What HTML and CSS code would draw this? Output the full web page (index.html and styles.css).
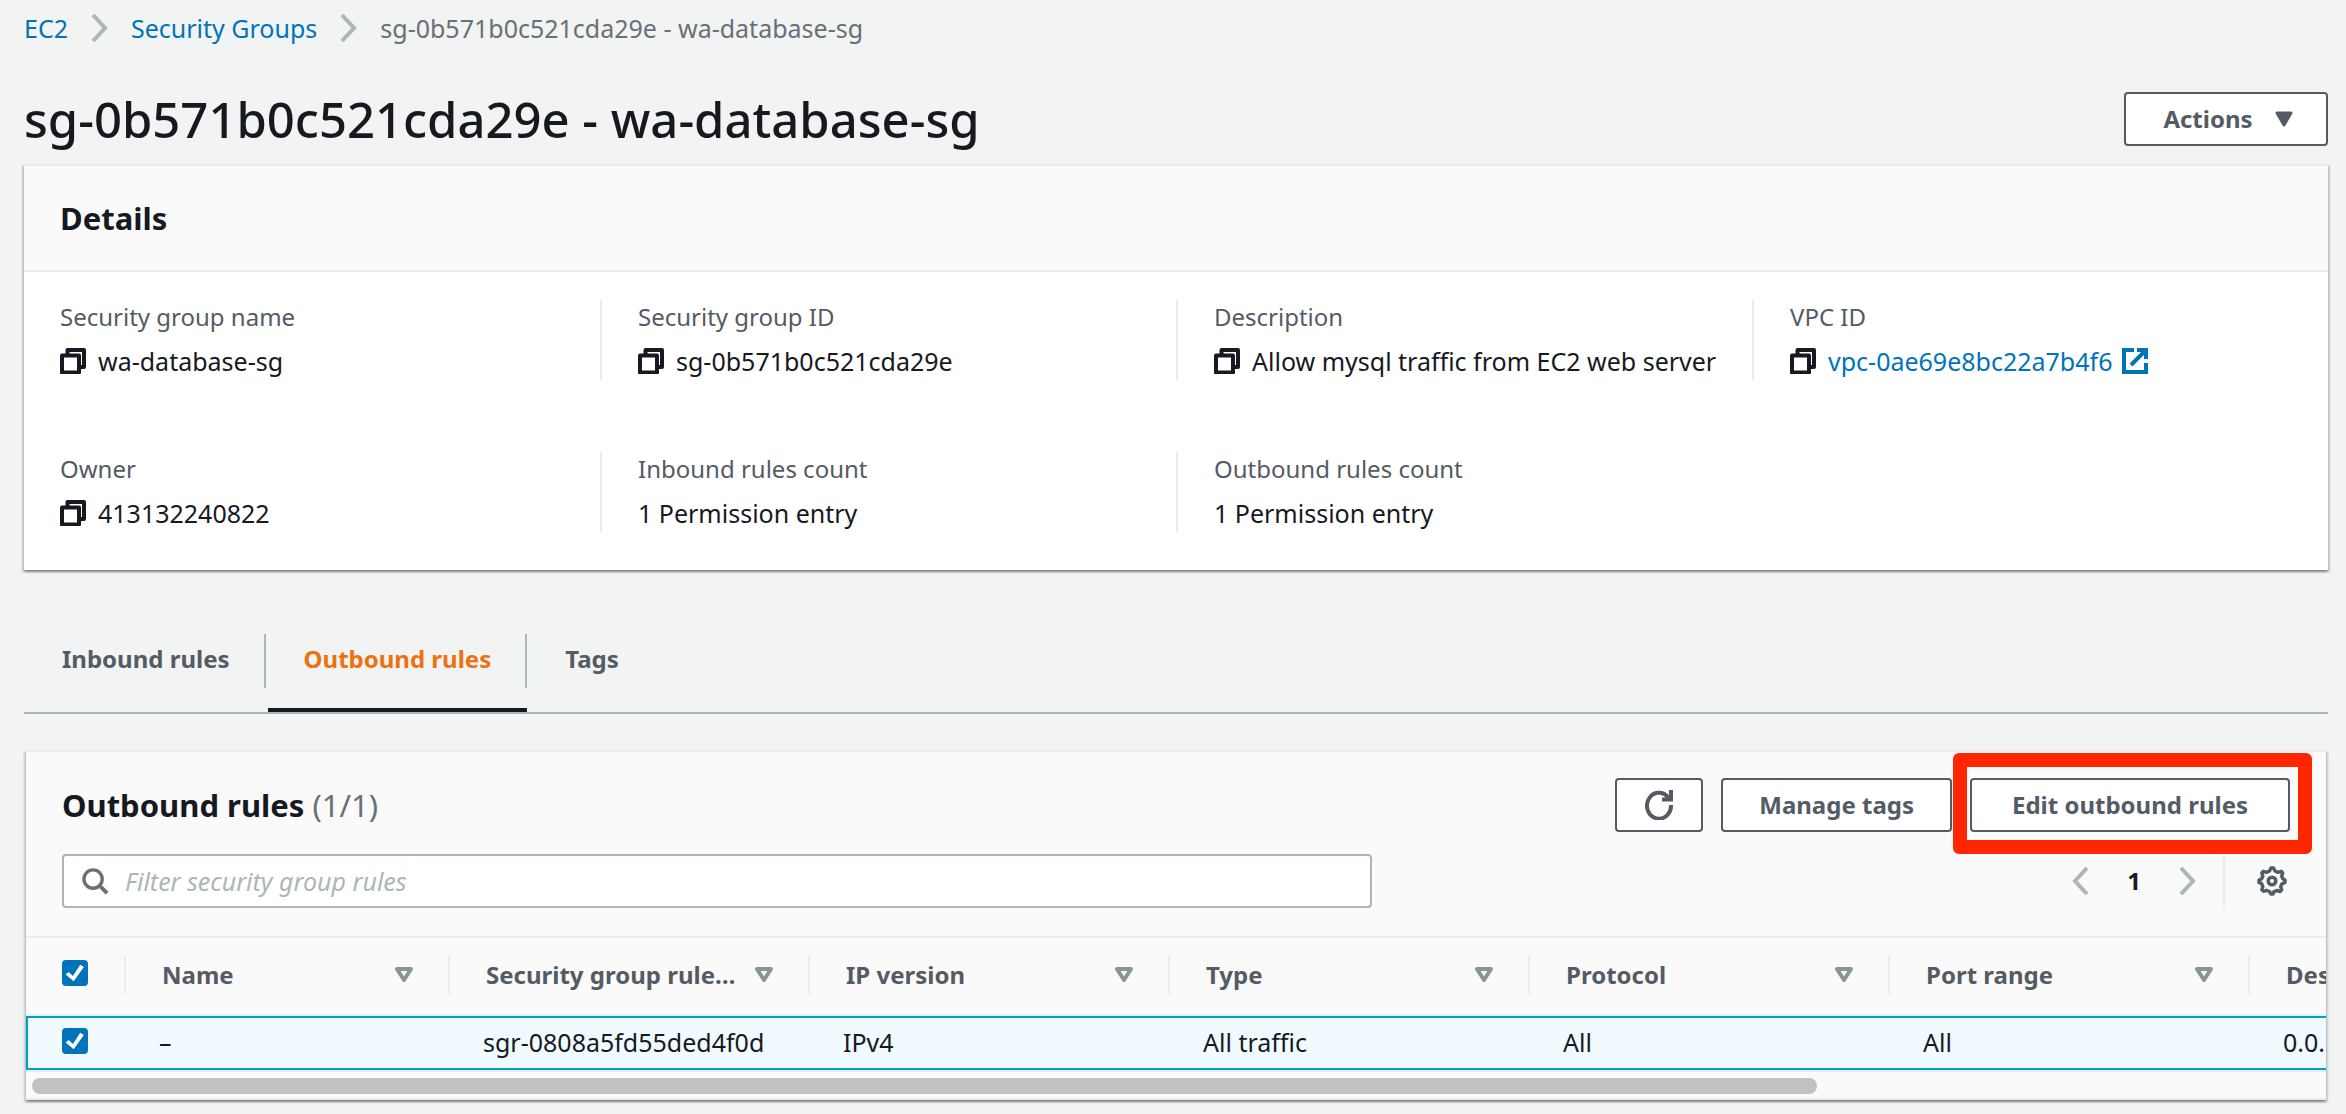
FILE: index.html
```html
<!DOCTYPE html>
<html lang="en">
<head>
<meta charset="utf-8">
<meta name="viewport" content="width=device-width, initial-scale=1">
<title>sg-0b571b0c521cda29e - wa-database-sg</title>
<link rel="stylesheet" href="styles.css">
</head>
<body>
<svg class="sprite" aria-hidden="true">
  <symbol id="i-copy" viewBox="0 0 26 26"><path d="M2 7.500h17v17H2z M7.500 7V2H24v17h-5" fill="none" stroke="currentColor" stroke-width="4" stroke-linejoin="round"/></symbol>
  <symbol id="i-external" viewBox="0 0 26 26"><path d="M12 2H2v22h22V15 M15 2h9v9 M23 3L9 17" fill="none" stroke="currentColor" stroke-width="4"/></symbol>
  <symbol id="i-next" viewBox="0 0 17 28"><path d="M2 1l12 13L2 27" fill="none" stroke="currentColor" stroke-width="4"/></symbol>
  <symbol id="i-prev" viewBox="0 0 17 28"><path d="M15 1L3 14l12 13" fill="none" stroke="currentColor" stroke-width="4"/></symbol>
  <symbol id="i-down" viewBox="0 0 18 16"><path d="M2 2h14L9 14z" fill="currentColor" stroke="currentColor" stroke-width="3" stroke-linejoin="round"/></symbol>
  <symbol id="i-sort" viewBox="0 0 18 16"><path d="M2 2h14L9 13z" fill="none" stroke="currentColor" stroke-width="4" stroke-linejoin="round"/></symbol>
  <symbol id="i-refresh" viewBox="0 0 28 30"><path d="M26 15A12 13 0 1 1 22.500 6.500L25 9 M26 0v9.500H17" fill="none" stroke="currentColor" stroke-width="4"/></symbol>
  <symbol id="i-search" viewBox="0 0 28 28"><circle cx="11.500" cy="11.500" r="9.500" fill="none" stroke="currentColor" stroke-width="3.500"/><path d="M18 18L26 26" stroke="currentColor" stroke-width="4"/></symbol>
  <symbol id="i-gear" viewBox="0 0 30 30"><path d="M15 2h1.500l1.500 3 3 1.300 3.200-1 1.500 1.600-1 3.100 1.200 2.800L28 14v2.500l-3 1.300-1.300 3 1 3-1.700 1.700-3-1-3 1.200L16 28h-2l-1.500-2.500-3-1.200-3 1-1.700-1.600 1-3-1.200-3L2 16.500V14l2.600-1.200L5.800 10l-1-3.100 1.600-1.600 3.100 1 3-1.300L14 2z" fill="none" stroke="currentColor" stroke-width="3.500" stroke-linejoin="round"/><circle cx="15" cy="15" r="3.800" fill="none" stroke="currentColor" stroke-width="3.500"/></symbol>
</svg>

<nav class="crumbs" aria-label="Breadcrumb">
  <a href="#">EC2</a>
  <svg class="chevron"><use href="#i-next"/></svg>
  <a href="#">Security Groups</a>
  <svg class="chevron"><use href="#i-next"/></svg>
  <span>sg-0b571b0c521cda29e - wa-database-sg</span>
</nav>

<main>
  <header class="page-head">
    <h1>sg-0b571b0c521cda29e - wa-database-sg</h1>
    <button class="btn btn-menu" type="button">Actions <svg class="tri"><use href="#i-down"/></svg></button>
  </header>

  <section class="card">
    <div class="card-head"><h2>Details</h2></div>
    <dl class="details">
      <div><dt>Security group name</dt><dd><svg class="icon"><use href="#i-copy"/></svg>wa-database-sg</dd></div>
      <div><dt>Security group ID</dt><dd><svg class="icon"><use href="#i-copy"/></svg>sg-0b571b0c521cda29e</dd></div>
      <div><dt>Description</dt><dd><svg class="icon"><use href="#i-copy"/></svg>Allow mysql traffic from EC2 web server</dd></div>
      <div><dt>VPC ID</dt><dd><svg class="icon"><use href="#i-copy"/></svg><a href="#">vpc-0ae69e8bc22a7b4f6 <svg class="icon"><use href="#i-external"/></svg></a></dd></div>
      <div><dt>Owner</dt><dd><svg class="icon"><use href="#i-copy"/></svg>413132240822</dd></div>
      <div><dt>Inbound rules count</dt><dd>1 Permission entry</dd></div>
      <div><dt>Outbound rules count</dt><dd>1 Permission entry</dd></div>
    </dl>
  </section>

  <nav class="tabs">
    <a href="#">Inbound rules</a>
    <a href="#" class="active" aria-current="page">Outbound rules</a>
    <a href="#">Tags</a>
  </nav>

  <section class="card rules">
    <div class="rules-head">
      <div class="bar">
        <h2>Outbound rules <span>(1/1)</span></h2>
        <div class="actions">
          <button class="btn btn-icon" type="button" aria-label="Refresh"><svg class="refresh"><use href="#i-refresh"/></svg></button>
          <button class="btn" type="button">Manage tags</button>
          <div class="marked">
            <button class="btn btn-wide" type="button">Edit outbound rules</button>
            <span class="marker"></span>
          </div>
        </div>
      </div>
      <div class="bar">
        <label class="search">
          <svg class="glass"><use href="#i-search"/></svg>
          <input type="text" placeholder="Filter security group rules" aria-label="Filter security group rules">
        </label>
        <div class="pager">
          <button type="button" aria-label="Previous page"><svg class="chevron"><use href="#i-prev"/></svg></button>
          <button type="button" class="page">1</button>
          <button type="button" aria-label="Next page"><svg class="chevron"><use href="#i-next"/></svg></button>
          <button type="button" class="settings" aria-label="Preferences"><svg class="gear"><use href="#i-gear"/></svg></button>
        </div>
      </div>
    </div>
    <div class="scroller">
      <table>
        <colgroup><col class="c-check"><col class="c-name"><col><col><col><col><col><col><col></colgroup>
        <thead>
          <tr>
            <th><input type="checkbox" checked aria-label="Select all rules"></th>
            <th><div>Name<svg class="sort"><use href="#i-sort"/></svg></div></th>
            <th><div>Security group rule…<svg class="sort"><use href="#i-sort"/></svg></div></th>
            <th><div>IP version<svg class="sort"><use href="#i-sort"/></svg></div></th>
            <th><div>Type<svg class="sort"><use href="#i-sort"/></svg></div></th>
            <th><div>Protocol<svg class="sort"><use href="#i-sort"/></svg></div></th>
            <th><div>Port range<svg class="sort"><use href="#i-sort"/></svg></div></th>
            <th><div>Destination</div></th>
            <th></th>
          </tr>
        </thead>
        <tbody>
          <tr>
            <td><input type="checkbox" checked aria-label="Select rule"></td>
            <td>–</td>
            <td>sgr-0808a5fd55ded4f0d</td>
            <td>IPv4</td>
            <td>All traffic</td>
            <td>All</td>
            <td>All</td>
            <td>0.0.0.0/0</td>
            <td></td>
          </tr>
        </tbody>
      </table>
    </div>
    <div class="track"><div class="thumb"></div></div>
  </section>
</main>
</body>
</html>
```
FILE: styles.css
```css
* { box-sizing: border-box; }

body {
  margin: 0;
  padding: 8px 18px 12px 24px;
  background: #f2f3f3;
  color: #16191f;
  font: 25px/34px "Noto Sans", "Open Sans", sans-serif;
}

h1, h2, dl, dd { margin: 0; }
a { color: #0073bb; text-decoration: none; }
button, input { font: inherit; color: inherit; }
button { cursor: pointer; }
svg { flex: none; display: block; }

.sprite { position: absolute; width: 0; height: 0; }
.icon { width: 26px; height: 26px; }
.chevron { width: 17px; height: 28px; color: #aab7b8; }
.tri, .sort { width: 18px; height: 16px; }
.sort { color: #879596; }
.refresh { width: 28px; height: 30px; }
.glass { width: 27px; height: 27px; color: #687078; }
.gear { width: 30px; height: 30px; }

.crumbs {
  display: flex;
  align-items: center;
  gap: 23px;
  height: 40px;
  color: #687078;
}

.page-head {
  display: flex;
  justify-content: space-between;
  align-items: center;
  margin: 44px 0 18px;
}
h1 { font-size: 49px; line-height: 54px; font-weight: 500; }
h2 { font-size: 31px; line-height: 54px; font-weight: 700; }
h2 span { font-weight: 400; color: #687078; }

.btn {
  display: flex;
  align-items: center;
  justify-content: center;
  gap: 22px;
  height: 54px;
  padding: 0 36px;
  border: 2px solid #545b64;
  border-radius: 4px;
  background: #fff;
  color: #545b64;
  font-size: 24px;
  font-weight: 700;
  white-space: nowrap;
}
.btn-menu { min-width: 204px; padding-right: 32px; }
.btn-icon { padding: 0 28px; }
.btn-wide { min-width: 320px; }

.card {
  border-top: 2px solid #eaeded;
  background: #fff;
  box-shadow: 0 2px 2px rgba(0, 28, 36, .3), 2px 2px 2px rgba(0, 28, 36, .15), -2px 2px 2px rgba(0, 28, 36, .15);
}
.card-head {
  padding: 25px 36px;
  background: #fafafa;
  border-bottom: 2px solid #eaeded;
}

.details {
  display: grid;
  grid-template-columns: repeat(4, 1fr);
  row-gap: 72px;
  padding: 28px 0 38px;
}
.details > div { padding: 0 20px 2px 36px; border-left: 2px solid #eaeded; }
.details > div:nth-child(4n + 1) { border-left-color: transparent; padding-left: 34px; }
dt { font-size: 24px; color: #545b64; }
dd { display: flex; align-items: center; gap: 12px; margin-top: 10px; }
dd a { display: flex; align-items: center; gap: 10px; }

.tabs {
  display: flex;
  margin: 64px 0 36px;
  border-bottom: 2px solid #aab7b8;
  font-size: 24px;
  font-weight: 700;
}
.tabs a {
  position: relative;
  height: 54px;
  margin-bottom: 24px;
  padding: 0 34px 0 38px;
  border-right: 2px solid #aab7b8;
  color: #545b64;
  line-height: 50px;
}
.tabs a:last-child { border-right: 0; }
.tabs .active { color: #ec7211; }
.tabs .active::after {
  content: "";
  position: absolute;
  left: 2px;
  right: -2px;
  bottom: -24px;
  height: 4px;
  background: #16191f;
}

.rules { margin: 0 2px; background: #fafafa; border-bottom: 2px solid #eaeded; }
.rules-head {
  display: grid;
  gap: 22px;
  padding: 26px 36px 28px;
  border-bottom: 2px solid #eaeded;
}
.bar { display: flex; justify-content: space-between; }
.actions { display: flex; gap: 18px; }
.marked { position: relative; }
.marker {
  position: absolute;
  inset: -25px -22px -22px -17px;
  border: 14px solid #ff2600;
  border-radius: 6px;
  pointer-events: none;
}

.search {
  display: flex;
  align-items: center;
  gap: 16px;
  flex: 0 1 1310px;
  height: 54px;
  padding: 0 18px;
  border: 2px solid #aab7b8;
  border-radius: 4px;
  background: #fff;
}
.search input { flex: 1; min-width: 0; padding: 0; border: 0; outline: 0; background: none; }
.search input::placeholder { color: #aab7b8; font-style: italic; opacity: 1; }

.pager { display: flex; align-items: center; }
.pager button { padding: 0; border: 0; background: none; }
.pager .page { width: 90px; font-size: 24px; font-weight: 700; }
.pager .settings {
  height: 54px;
  margin-left: 27px;
  padding: 0 3px 0 32px;
  border-left: 2px solid #eaeded;
  color: #545b64;
}

.scroller { overflow: hidden; }
table { width: 2942px; table-layout: fixed; border-spacing: 0; }
.c-check { width: 98px; }
.c-name { width: 324px; }
th, td { padding: 0 0 2px; text-align: left; white-space: nowrap; }
th { height: 78px; border-bottom: 2px solid #eaeded; color: #545b64; font-size: 24px; font-weight: 700; }
th div {
  display: flex;
  justify-content: space-between;
  align-items: center;
  height: 38px;
  padding: 0 35px 0 36px;
  border-left: 2px solid #eaeded;
}
td {
  height: 54px;
  padding-left: 35px;
  border: solid #00a1c9;
  border-width: 2px 0;
  background: #f1faff;
}
th:first-child { padding: 0 0 6px 36px; }
td:first-child { border-left-width: 2px; padding: 0 0 4px 34px; }

input[type="checkbox"] {
  appearance: none;
  display: block;
  width: 26px;
  height: 26px;
  margin: 0;
  border-radius: 4px;
  background: #0073bb;
}
input[type="checkbox"]:checked::before {
  content: "";
  display: block;
  width: 26px;
  height: 26px;
  background: #fff;
  clip-path: polygon(14% 56%, 26% 46%, 42% 62%, 70% 18%, 84% 27%, 45% 82%);
}

.track { padding: 6px 6px 4px; border-top: 2px solid #eaeded; }
.thumb { width: 78%; height: 16px; border-radius: 8px; background: #c1c1c1; }
```
